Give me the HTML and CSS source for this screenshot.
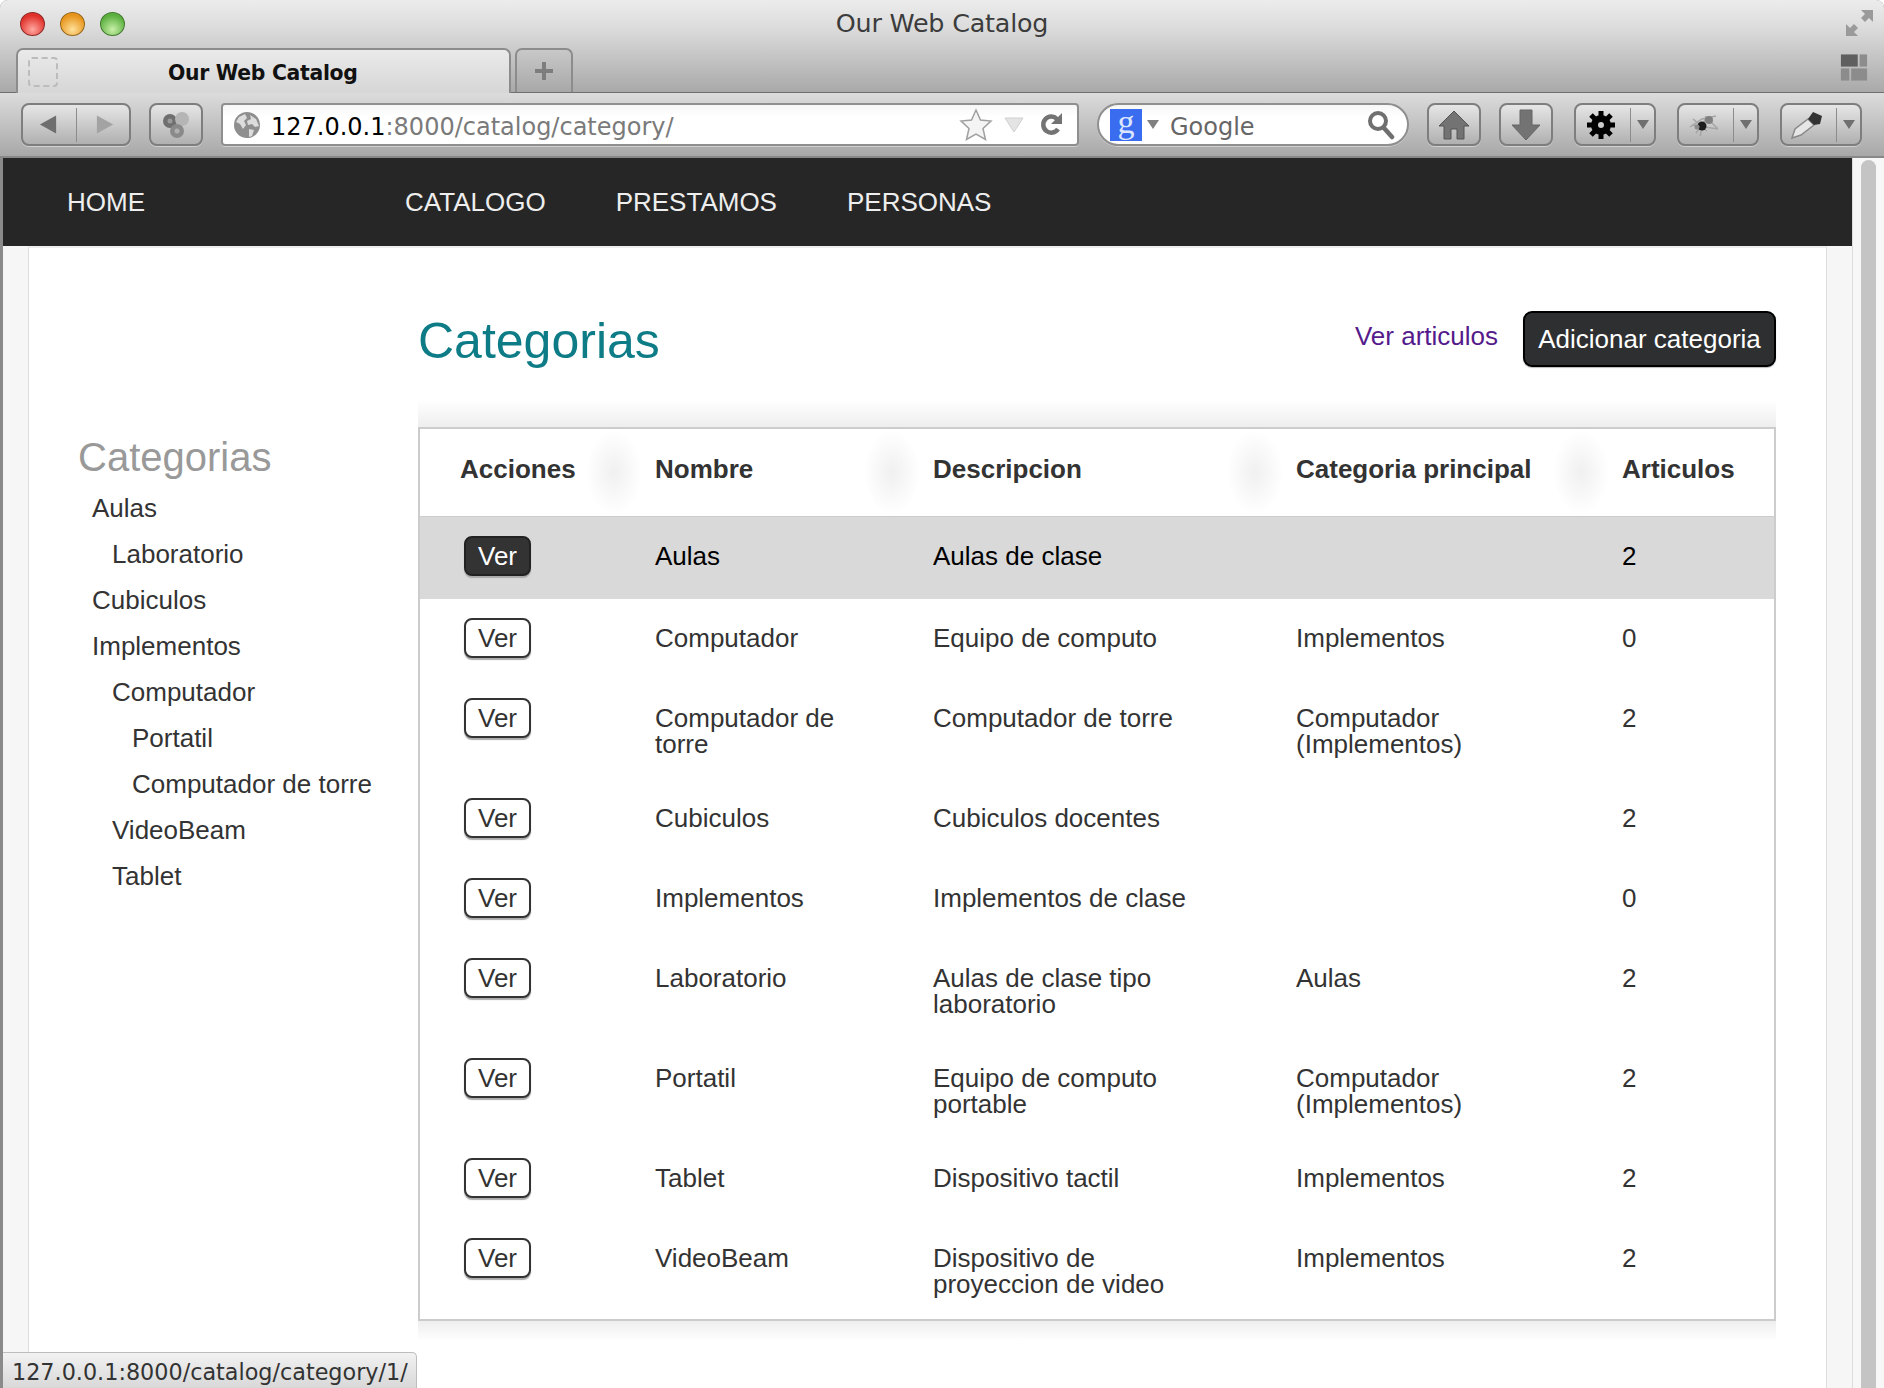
FILE: index.html
```html
<!DOCTYPE html>
<html lang="es">
<head>
  <meta charset="UTF-8">
  <title>Our Web Catalog</title>
  <link rel="stylesheet" href="styles.css">
</head>
<body>
<div class="window">

  <div class="chrome">
    <div class="titlebar">
      <div class="lights">
        <span class="light red"></span>
        <span class="light yellow"></span>
        <span class="light green"></span>
      </div>
      <div class="window-title">Our Web Catalog</div>
      <svg class="expand" width="30" height="30" viewBox="0 0 30 30">
        <path d="M17 2h12v12l-4-4-4 4-4-4 4-4z M2 28V16l4 4 4-4 4 4-4 4 4 4z" fill="#9a9a9a"/>
      </svg>
    </div>
    <div class="tabstrip">
      <div class="tab">
        <span class="favicon"></span>
        <span class="tab-title">Our Web Catalog</span>
      </div>
      <div class="newtab">
        <svg width="22" height="22" viewBox="0 0 22 22"><path d="M9 2h4v7h7v4h-7v7H9v-7H2V9h7z" fill="#7d7d7d"/></svg>
      </div>
      <svg class="tabview" width="28" height="29" viewBox="0 0 30 30">
        <rect x="1" y="1" width="18" height="13" fill="#5f5f5f"/>
        <rect x="21" y="1" width="8" height="13" fill="#8c8c8c"/>
        <rect x="1" y="16" width="9" height="13" fill="#8c8c8c"/>
        <rect x="12" y="16" width="17" height="13" fill="#8c8c8c"/>
      </svg>
    </div>
  </div>

  <div class="toolbar">
    <div class="btn btn-nav">
      <svg width="18" height="21" viewBox="0 0 20 22"><path d="M19 1v20L1 11z" fill="#6e6e6e"/></svg>
      <span class="sep"></span>
      <svg width="18" height="21" viewBox="0 0 20 22"><path d="M1 1v20l18-10z" fill="#a3a3a3"/></svg>
    </div>
    <div class="btn btn-share">
      <svg width="30" height="30" viewBox="0 0 30 30">
        <circle cx="9" cy="11" r="7" fill="#6f6f6f"/>
        <circle cx="21" cy="9" r="7" fill="#b5b5b5"/>
        <circle cx="16" cy="21" r="7" fill="#8a8a8a"/>
        <circle cx="9" cy="11" r="2.5" fill="#9a9a9a"/>
        <circle cx="16" cy="21" r="2.5" fill="#b0b0b0"/>
      </svg>
    </div>
    <div class="urlbar">
      <svg class="globe" width="28" height="28" viewBox="0 0 28 28">
        <circle cx="14" cy="14" r="13" fill="#8e8e8e"/>
        <path d="M6 6l6-3 2 4-3 3 2 4-3 4-3-5-4-2zM17 4l6 4 3 7-4 1-3-3-4 1-1-4 4-2zM16 18l5 1-2 6-3 1z" fill="#dcdcdc"/>
      </svg>
      <span class="url"><b>127.0.0.1</b>:8000/catalog/category/</span>
      <svg class="star" width="34" height="34" viewBox="0 0 34 34">
        <path d="M17 2l4.5 10 10.5 1-8 7.500 2.500 11L17 26l-9.500 5.500 2.500-11-8-7.500 10.500-1z" fill="#f4f4f4" stroke="#a0a0a0" stroke-width="1.500"/>
      </svg>
      <svg class="reader" width="20" height="16" viewBox="0 0 20 16"><path d="M1 1h18L10 15z" fill="#e4e4e4" stroke="#cfcfcf"/></svg>
      <svg class="reload" width="24" height="26" viewBox="0 0 24 26">
        <path d="M19 17a8 8 0 1 1-1-10" fill="none" stroke="#737373" stroke-width="4.500"/>
        <path d="M23 1v11H12z" fill="#737373"/>
      </svg>
    </div>
    <div class="searchbar">
      <span class="g-logo">g</span>
      <svg width="12" height="9" viewBox="0 0 12 9"><path d="M0 0h12L6 9z" fill="#808080"/></svg>
      <span class="search-text">Google</span>
      <svg width="28" height="30" viewBox="0 0 28 30">
        <circle cx="11" cy="11" r="8" fill="none" stroke="#6f6f6f" stroke-width="4"/>
        <path d="M17 18l8 9" stroke="#6f6f6f" stroke-width="4.500" stroke-linecap="round"/>
      </svg>
    </div>
    <div class="btn btn-square">
      <svg width="32" height="30" viewBox="0 0 32 30"><path d="M16 1L1 16h5v13h7v-10h6v10h7V16h5z" fill="#737373" stroke="#555" stroke-width="1"/></svg>
    </div>
    <div class="btn btn-square">
      <svg width="30" height="32" viewBox="0 0 30 32"><path d="M9 1h12v15h8L15 31 1 16h8z" fill="#737373" stroke="#666" stroke-width="1"/></svg>
    </div>
    <div class="btn btn-split">
      <span class="split-icon">
        <svg width="28" height="28" viewBox="0 0 28 28">
          <circle cx="14" cy="14" r="6.500" fill="none" stroke="#000" stroke-width="7"/>
          <path d="M14 0v6M14 22v6M0 14h6M22 14h6M4 4l4 4M20 20l4 4M24 4l-4 4M8 20l-4 4" stroke="#000" stroke-width="5"/>
        </svg>
      </span>
      <span class="sep"></span>
      <svg class="caret" width="12" height="9" viewBox="0 0 12 9"><path d="M0 0h12L6 9z" fill="#707070"/></svg>
    </div>
    <div class="btn btn-split">
      <span class="split-icon">
        <svg width="32" height="28" viewBox="0 0 32 28">
          <path d="M2 16l12-8 14-3M5 8l14 12M12 25l6-20M22 10l8 8M8 22l12-16M4 14l26 4" stroke="#a5a5a5" stroke-width="1.500" fill="none"/>
          <circle cx="14" cy="15" r="4.500" fill="#1d1d1d"/>
          <circle cx="21" cy="9" r="4" fill="#808080"/>
          <circle cx="9" cy="16" r="2.500" fill="#8c8c8c"/>
        </svg>
      </span>
      <span class="sep"></span>
      <svg class="caret" width="12" height="9" viewBox="0 0 12 9"><path d="M0 0h12L6 9z" fill="#707070"/></svg>
    </div>
    <div class="btn btn-split">
      <span class="split-icon">
        <svg width="34" height="30" viewBox="0 0 34 30">
          <path d="M2 28l3-9L18 9l6 6-13 10z" fill="#e6e6e6" stroke="#8a8a8a" stroke-width="1.500"/>
          <path d="M18 9l5-7 9 4-2 8-6 1z" fill="#333"/>
        </svg>
      </span>
      <span class="sep"></span>
      <svg class="caret" width="12" height="9" viewBox="0 0 12 9"><path d="M0 0h12L6 9z" fill="#707070"/></svg>
    </div>
  </div>

  <div class="viewport">
    <div class="page">
      <nav class="navbar">
        <a class="brand" href="#">HOME</a>
        <a href="#">CATALOGO</a>
        <a href="#">PRESTAMOS</a>
        <a href="#">PERSONAS</a>
      </nav>
      <div class="sheet">
        <aside class="sidebar">
          <h3>Categorias</h3>
          <ul>
            <li>Aulas
              <ul>
                <li>Laboratorio</li>
              </ul>
            </li>
            <li>Cubiculos</li>
            <li>Implementos
              <ul>
                <li>Computador
                  <ul>
                    <li>Portatil</li>
                    <li>Computador de torre</li>
                  </ul>
                </li>
                <li>VideoBeam</li>
                <li>Tablet</li>
              </ul>
            </li>
          </ul>
        </aside>
        <main class="content">
          <div class="content-head">
            <h1>Categorias</h1>
            <a class="link" href="#">Ver articulos</a>
            <a class="add" href="#">Adicionar categoria</a>
          </div>
          <div class="shade-top"></div>
          <table>
            <colgroup>
              <col class="c1"><col class="c2"><col class="c3"><col class="c4"><col class="c5">
            </colgroup>
            <thead>
              <tr>
                <th>Acciones</th>
                <th>Nombre</th>
                <th>Descripcion</th>
                <th>Categoria principal</th>
                <th>Articulos</th>
              </tr>
            </thead>
            <tbody>
              <tr class="selected">
                <td><a class="ver" href="#">Ver</a></td>
                <td>Aulas</td>
                <td>Aulas de clase</td>
                <td></td>
                <td>2</td>
              </tr>
              <tr>
                <td><a class="ver" href="#">Ver</a></td>
                <td>Computador</td>
                <td>Equipo de computo</td>
                <td>Implementos</td>
                <td>0</td>
              </tr>
              <tr>
                <td><a class="ver" href="#">Ver</a></td>
                <td>Computador de torre</td>
                <td>Computador de torre</td>
                <td>Computador (Implementos)</td>
                <td>2</td>
              </tr>
              <tr>
                <td><a class="ver" href="#">Ver</a></td>
                <td>Cubiculos</td>
                <td>Cubiculos docentes</td>
                <td></td>
                <td>2</td>
              </tr>
              <tr>
                <td><a class="ver" href="#">Ver</a></td>
                <td>Implementos</td>
                <td>Implementos de clase</td>
                <td></td>
                <td>0</td>
              </tr>
              <tr>
                <td><a class="ver" href="#">Ver</a></td>
                <td>Laboratorio</td>
                <td>Aulas de clase tipo laboratorio</td>
                <td>Aulas</td>
                <td>2</td>
              </tr>
              <tr>
                <td><a class="ver" href="#">Ver</a></td>
                <td>Portatil</td>
                <td>Equipo de computo portable</td>
                <td>Computador (Implementos)</td>
                <td>2</td>
              </tr>
              <tr>
                <td><a class="ver" href="#">Ver</a></td>
                <td>Tablet</td>
                <td>Dispositivo tactil</td>
                <td>Implementos</td>
                <td>2</td>
              </tr>
              <tr>
                <td><a class="ver" href="#">Ver</a></td>
                <td>VideoBeam</td>
                <td>Dispositivo de proyeccion de video</td>
                <td>Implementos</td>
                <td>2</td>
              </tr>
            </tbody>
          </table>
          <div class="shade-bottom"></div>
        </main>
      </div>
    </div>
    <div class="scrollbar"><span class="thumb"></span></div>
    <div class="status">127.0.0.1:8000/catalog/category/1/</div>
  </div>

</div>
</body>
</html>
```

FILE: styles.css
```css
html, body {
  margin: 0;
  padding: 0;
  height: 100%;
  background-color: #fff;
}

body {
  font-family: "Liberation Sans", Arial, sans-serif;
  font-size: 26px;
  color: #333;
  overflow: hidden;
}

a {
  text-decoration: none;
}

.window {
  height: 1388px;
  display: flex;
  flex-direction: column;
  overflow: hidden;
  border-radius: 8px 8px 0 0;
  background-color: #8a8a8a;
}

/* title bar + tabs share one gradient */
.chrome {
  height: 93px;
  background: linear-gradient(#ececec, #dcdcdc 30%, #a9a9a9);
  border-bottom: 1px solid #6f6f6f;
  box-sizing: border-box;
}

.titlebar {
  height: 47px;
  display: grid;
  grid-template-columns: 1fr auto 1fr;
  align-items: center;
  padding: 0 20px;
  box-sizing: border-box;
}

.lights {
  display: flex;
  gap: 15px;
}

.light {
  width: 25px;
  height: 24px;
  border-radius: 50%;
  box-sizing: border-box;
  border: 1px solid #777;
}

.red {
  background: radial-gradient(circle at 50% 75%, #ffa8a0, #e0302a 70%);
  border-color: #8e2a26;
}

.yellow {
  background: radial-gradient(circle at 50% 75%, #ffe09a, #e8951c 70%);
  border-color: #96681c;
}

.green {
  background: radial-gradient(circle at 50% 75%, #c8f0a8, #5cb040 70%);
  border-color: #427a30;
}

.window-title {
  font-family: "DejaVu Sans", sans-serif;
  font-size: 25.400px;
  letter-spacing: -0.200px;
  color: #3c3c3c;
  margin-top: -2px;
}

.expand {
  justify-self: end;
  margin: -1px -10px 0 0;
}

.tabstrip {
  height: 45px;
  display: flex;
  align-items: flex-end;
  padding-left: 16px;
  box-sizing: border-box;
}

.tab {
  width: 495px;
  height: 45px;
  margin-bottom: -1px;
  display: flex;
  align-items: center;
  box-sizing: border-box;
  padding-left: 10px;
  background: linear-gradient(#eaeaea, #d6d6d6);
  border: 2px solid #8c8c8c;
  border-bottom: none;
  border-radius: 7px 7px 0 0;
  position: relative;
  z-index: 1;
}

.favicon {
  width: 30px;
  height: 30px;
  box-sizing: border-box;
  border: 2px dashed #bcbcbc;
  border-radius: 4px;
}

.tab-title {
  font-family: "DejaVu Sans", sans-serif;
  font-weight: bold;
  font-size: 20.400px;
  letter-spacing: -0.300px;
  color: #111;
  margin: 2px 0 0 110px;
}

.newtab {
  width: 58px;
  height: 44px;
  margin-left: 4px;
  display: flex;
  align-items: center;
  justify-content: center;
  box-sizing: border-box;
  background: linear-gradient(#c8c8c8, #a8a8a8);
  border: 2px solid #8c8c8c;
  border-bottom: none;
  border-radius: 7px 7px 0 0;
}

.tabview {
  margin-left: auto;
  margin-right: 16px;
  margin-bottom: 10px;
}

.toolbar {
  height: 65px;
  display: flex;
  align-items: center;
  gap: 18px;
  padding-left: 21px;
  box-sizing: border-box;
  background: linear-gradient(#dcdcdc, #a8a8a8);
  border-bottom: 2px solid #888;
}

.btn {
  height: 43px;
  display: flex;
  align-items: center;
  box-sizing: border-box;
  border: 2px solid #7e7e7e;
  border-radius: 8px;
  background: linear-gradient(#e6e6e6, #b0b0b0);
  box-shadow: 0 1px 0 #d0d0d0;
}

.btn-nav {
  width: 110px;
  gap: 19px;
  padding-left: 16px;
}

.sep {
  width: 1px;
  height: 34px;
  background-color: #8c8c8c;
}

.btn-share {
  width: 54px;
  justify-content: center;
}

.urlbar {
  width: 858px;
  height: 43px;
  display: flex;
  align-items: center;
  box-sizing: border-box;
  padding: 0 14px 0 10px;
  background: linear-gradient(#f6f6f6, #fff 30%);
  border: 2px solid #8f8f8f;
  border-radius: 4px;
  box-shadow: 0 1px 0 #d0d0d0;
}

.globe {
  flex: none;
}

.url {
  font-family: "DejaVu Sans", sans-serif;
  font-size: 24px;
  color: #7a7a7a;
  margin: 5px 0 0 10px;
  flex: 1;
  white-space: nowrap;
}

.url b {
  font-weight: normal;
  color: #000;
}

.star {
  margin-right: 11px;
}

.reader {
  margin-right: 15px;
}

.searchbar {
  width: 312px;
  height: 43px;
  display: flex;
  align-items: center;
  box-sizing: border-box;
  padding: 0 12px 0 11px;
  background: linear-gradient(#f6f6f6, #fff 30%);
  border: 2px solid #8f8f8f;
  border-radius: 22px;
  box-shadow: 0 1px 0 #d0d0d0;
}

.g-logo {
  width: 32px;
  height: 32px;
  background-color: #3a6cf0;
  color: #dde6ff;
  font-family: "Liberation Serif", serif;
  font-size: 34px;
  line-height: 26px;
  text-align: center;
  margin-right: 5px;
}

.search-text {
  font-family: "DejaVu Sans", sans-serif;
  font-size: 24px;
  color: #666;
  margin: 5px 0 0 11px;
  flex: 1;
}

.btn-square {
  width: 54px;
  justify-content: center;
}

.btn-split {
  width: 82px;
  margin-left: 3px;
}

.split-icon {
  width: 50px;
  margin-right: 4px;
  display: flex;
  justify-content: center;
}

.split-icon + .sep {
  flex: none;
}

.caret {
  margin-left: 6px;
}

.viewport {
  flex: 1;
  display: flex;
  position: relative;
  min-height: 0;
  margin-left: 3px;
  background-color: #f6f6f6;
}

.page {
  flex: 1;
  min-width: 0;
  display: flex;
  flex-direction: column;
}

.navbar {
  height: 88px;
  flex: none;
  display: flex;
  align-items: center;
  background-color: #262626;
  padding-left: 64px;
}

.navbar a {
  color: #eee;
  margin-right: 70px;
}

.navbar .brand {
  margin-right: 260px;
}

.sheet {
  flex: 1;
  display: flex;
  margin: 0 25px 0 25px;
  background-color: #fff;
  border-left: 1px solid #ddd;
  border-right: 1px solid #ddd;
  border-top: 2px solid #eee;
}

.sidebar {
  width: 389px;
  flex: none;
  box-sizing: border-box;
  padding: 186px 0 0 49px;
}

.sidebar h3 {
  margin: 0 0 5px 0;
  font-size: 40px;
  font-weight: normal;
  line-height: 46px;
  color: #999;
}

.sidebar ul {
  list-style: none;
  margin: 0;
  padding: 0 0 0 20px;
}

.sidebar > ul {
  padding-left: 14px;
}

.sidebar li {
  line-height: 46px;
}

.content {
  width: 1358px;
  flex: none;
}

.content-head {
  display: flex;
  align-items: center;
  padding-top: 63px;
}

.content-head h1 {
  margin: 0 auto 0 0;
  padding-top: 3px;
  font-size: 50px;
  line-height: 50px;
  font-weight: normal;
  color: #0e7c86;
}

.link {
  color: #551a8b;
  margin: 0 25px 5px 0;
}

.add {
  width: 253px;
  height: 56px;
  line-height: 52px;
  box-sizing: border-box;
  text-align: center;
  color: #fff;
  background-color: #2e2f31;
  border: 2px solid #000;
  border-radius: 9px;
  box-shadow: 0 1px 1px #bbb;
}

.shade-top {
  height: 27px;
  margin-top: 33px;
  background: linear-gradient(#fff, #eee);
}

.shade-bottom {
  height: 20px;
  background: linear-gradient(#eee, #fff);
}

table {
  width: 100%;
  table-layout: fixed;
  border-collapse: collapse;
  border: 2px solid #ccc;
  background-color: #fff;
}

.c1 { width: 195px; }
.c2 { width: 278px; }
.c3 { width: 363px; }
.c4 { width: 326px; }

/* soft blurred dividers between the header cells */
th {
  height: 88px;
  padding: 0 0 5px 41px;
  box-sizing: border-box;
  text-align: left;
  font-weight: bold;
  border-bottom: 1px solid #ccc;
  background:
    radial-gradient(ellipse 28px 42px at 100% 50%, #f0f0f0, transparent),
    radial-gradient(ellipse 28px 42px at 0 50%, #f0f0f0, transparent);
}

th:first-child {
  padding-left: 40px;
  background: radial-gradient(ellipse 28px 42px at 100% 50%, #f0f0f0, transparent);
}

th:last-child {
  background: radial-gradient(ellipse 28px 42px at 0 50%, #f0f0f0, transparent);
}

td {
  padding: 26px 20px 22px 41px;
  vertical-align: top;
  line-height: 26px;
}

td:first-child {
  padding: 19px 0 21px 44px;
}

td:nth-child(3) {
  padding-right: 60px;
}

.selected {
  height: 83px;
  background-color: #d9d9d9;
  color: #000;
}

.ver {
  display: block;
  width: 67px;
  height: 40px;
  line-height: 36px;
  box-sizing: border-box;
  text-align: center;
  color: #333;
  background-color: #fff;
  border: 2px solid #333;
  border-radius: 8px;
  box-shadow: 0 2px 1px #aaa;
}

.selected .ver {
  color: #fff;
  background-color: #333;
  border-color: #222;
}

.scrollbar {
  width: 32px;
  flex: none;
  box-sizing: border-box;
  padding: 2px 8px 0 8px;
  background-color: #f7f7f7;
  border-left: 1px solid #ddd;
}

.thumb {
  display: block;
  height: 100%;
  background-color: #c4c4c4;
  border-radius: 8px 8px 0 0;
}

/* link preview pops over the page */
.status {
  position: absolute;
  left: 0;
  bottom: 0;
  width: 414px;
  height: 36px;
  box-sizing: border-box;
  padding: 6px 0 0 9px;
  font-family: "DejaVu Sans", sans-serif;
  font-size: 22.300px;
  white-space: nowrap;
  color: #333;
  background: linear-gradient(#f2f2f2, #d8d8d8);
  border: 1px solid #bdbdbd;
  border-bottom: none;
  border-left: none;
  border-radius: 0 5px 0 0;
}
```
